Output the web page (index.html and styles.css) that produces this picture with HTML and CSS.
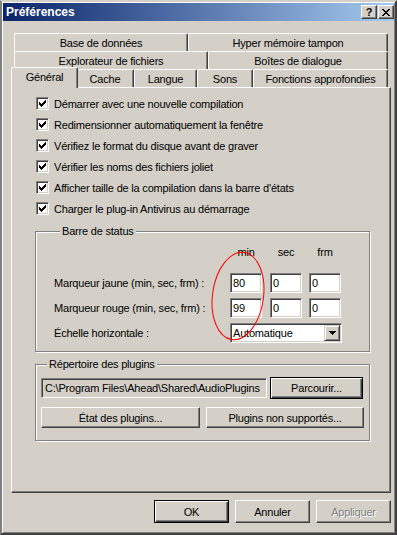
FILE: index.html
```html
<!DOCTYPE html>
<html>
<head>
    <title>Préférences</title>
    <link rel="stylesheet" href="styles.css">
</head>
<body>
<div class="window">
    <div class="titlebar">
        <span class="title">Préférences</span>
        <div class="caption-buttons">
            <span class="cap-btn">?</span>
            <span class="cap-btn">
                <svg width="8" height="7" viewBox="0 0 8 7"><path d="M0 0h2v1H0zM6 0h2v1H6zM1 1h2v1H1zM5 1h2v1H5zM2 2h4v1H2zM3 3h2v1H3zM2 4h4v1H2zM1 5h2v1H1zM5 5h2v1H5zM0 6h2v1H0zM6 6h2v1H6z" fill="#000"/></svg>
            </span>
        </div>
    </div>

    <div class="sheet">
        <!-- tab rows, back to front -->
        <div class="tab-row">
            <div class="tab tab-base">Base de données</div>
            <div class="tab tab-hyper">Hyper mémoire tampon</div>
        </div>
        <div class="tab-row">
            <div class="tab tab-explorer">Explorateur de fichiers</div>
            <div class="tab tab-dialogs">Boîtes de dialogue</div>
        </div>
        <div class="tab-row front">
            <div class="tab tab-general active">Général</div>
            <div class="tab tab-cache">Cache</div>
            <div class="tab tab-lang">Langue</div>
            <div class="tab tab-sounds">Sons</div>
            <div class="tab tab-advanced">Fonctions approfondies</div>
        </div>

        <div class="panel">
            <ul class="checks">
                <li><span class="checkbox"><svg width="7" height="7" viewBox="0 0 7 7"><path d="M6 0h1v1H6zM5 1h2v1H5zM0 2h1v1H0zM4 2h3v1H4zM0 3h2v1H0zM3 3h3v1H3zM0 4h5v1H0zM1 5h3v1H1zM2 6h1v1H2z"/></svg></span>Démarrer avec une nouvelle compilation</li>
                <li><span class="checkbox"><svg width="7" height="7" viewBox="0 0 7 7"><path d="M6 0h1v1H6zM5 1h2v1H5zM0 2h1v1H0zM4 2h3v1H4zM0 3h2v1H0zM3 3h3v1H3zM0 4h5v1H0zM1 5h3v1H1zM2 6h1v1H2z"/></svg></span>Redimensionner automatiquement la fenêtre</li>
                <li><span class="checkbox"><svg width="7" height="7" viewBox="0 0 7 7"><path d="M6 0h1v1H6zM5 1h2v1H5zM0 2h1v1H0zM4 2h3v1H4zM0 3h2v1H0zM3 3h3v1H3zM0 4h5v1H0zM1 5h3v1H1zM2 6h1v1H2z"/></svg></span>Vérifiez le format du disque avant de graver</li>
                <li><span class="checkbox"><svg width="7" height="7" viewBox="0 0 7 7"><path d="M6 0h1v1H6zM5 1h2v1H5zM0 2h1v1H0zM4 2h3v1H4zM0 3h2v1H0zM3 3h3v1H3zM0 4h5v1H0zM1 5h3v1H1zM2 6h1v1H2z"/></svg></span>Vérifier les noms des fichiers joliet</li>
                <li><span class="checkbox"><svg width="7" height="7" viewBox="0 0 7 7"><path d="M6 0h1v1H6zM5 1h2v1H5zM0 2h1v1H0zM4 2h3v1H4zM0 3h2v1H0zM3 3h3v1H3zM0 4h5v1H0zM1 5h3v1H1zM2 6h1v1H2z"/></svg></span>Afficher taille de la compilation dans la barre d'états</li>
                <li><span class="checkbox"><svg width="7" height="7" viewBox="0 0 7 7"><path d="M6 0h1v1H6zM5 1h2v1H5zM0 2h1v1H0zM4 2h3v1H4zM0 3h2v1H0zM3 3h3v1H3zM0 4h5v1H0zM1 5h3v1H1zM2 6h1v1H2z"/></svg></span>Charger le plug-in Antivirus au démarrage</li>
            </ul>

            <div class="group status-group">
                <span class="group-title">Barre de status</span>
                <div class="status-grid">
                    <span></span>
                    <span class="col-head">min</span>
                    <span class="col-head">sec</span>
                    <span class="col-head">frm</span>

                    <span>Marqueur jaune (min, sec, frm) :</span>
                    <span class="field">80</span>
                    <span class="field">0</span>
                    <span class="field">0</span>

                    <span>Marqueur rouge (min, sec, frm) :</span>
                    <span class="field">99</span>
                    <span class="field">0</span>
                    <span class="field">0</span>

                    <span>Échelle horizontale :</span>
                    <div class="combo">
                        <span class="combo-text">Automatique</span>
                        <span class="combo-btn"><svg width="7" height="4" viewBox="0 0 7 4"><path d="M0 0h7v1H0zM1 1h5v1H1zM2 2h3v1H2zM3 3h1v1H3z"/></svg></span>
                    </div>
                </div>
            </div>

            <div class="group plugins-group">
                <span class="group-title">Répertoire des plugins</span>
                <div class="plugin-row">
                    <span class="field path">C:\Program Files\Ahead\Shared\AudioPlugins</span>
                    <span class="btn default browse">Parcourir...</span>
                </div>
                <div class="plugin-row second">
                    <span class="btn state">État des plugins...</span>
                    <span class="btn unsupported">Plugins non supportés...</span>
                </div>
            </div>
        </div>

        <div class="dialog-buttons">
            <span class="btn default">OK</span>
            <span class="btn">Annuler</span>
            <span class="btn disabled">Appliquer</span>
        </div>
    </div>

    <!-- red hand-drawn circle over the min column -->
    <svg class="annotation" width="397" height="535" viewBox="0 0 397 535">
        <ellipse cx="238" cy="296" rx="25.5" ry="44" transform="rotate(8 238 296)" fill="none" stroke="#f00" stroke-width="1"/>
    </svg>
</div>
</body>
</html>
```

FILE: styles.css
```css
/* classic windows dialog */

body {
    margin: 0;
    background: #d4d0c8;
    font-family: "Liberation Sans", Arial, sans-serif;
    font-size: 11px;
    letter-spacing: -0.2px;
    color: #000;
}

.window {
    position: relative;
    width: 397px;
    height: 535px;
    box-sizing: border-box;
    padding: 1px;
    background: #d4d0c8;
    border-style: solid;
    border-width: 2px;
    border-color: #d4d0c8 #404040 #404040 #808080;
    box-shadow: inset 1px 1px #fff, inset -1px -1px #808080;
}

.titlebar {
    height: 18px;
    display: flex;
    align-items: center;
    justify-content: space-between;
    padding-left: 3px;
    background: linear-gradient(to right, #0a246a, #a6caf0);
    color: #fff;
}

.title {
    font-weight: bold;
    font-size: 12px;
    letter-spacing: 0;
}

.caption-buttons {
    display: flex;
    gap: 1px;
}

.cap-btn {
    box-sizing: border-box;
    width: 16px;
    height: 14px;
    display: flex;
    align-items: center;
    justify-content: center;
    background: #d4d0c8;
    color: #000;
    font-weight: bold;
    font-size: 11px;
    border: 1px solid;
    border-color: #fff #404040 #404040 #fff;
    box-shadow: inset -1px -1px #808080;
}

.sheet {
    margin: 12px 0 0 8px;
    width: 380px;
}

/* tabs */
.tab-row {
    display: flex;
    align-items: flex-start;
    height: 18px;
    margin: 0 3px;
}

.tab-row.front {
    position: relative;
    z-index: 1;
    margin: 0 3px 0 2px;
}

.tab {
    box-sizing: border-box;
    height: 18px;
    display: flex;
    align-items: center;
    justify-content: center;
    background: #d4d0c8;
    border-top: 1px solid #fff;
    border-left: 1px solid #fff;
    border-right: 1px solid #404040;
    border-radius: 2px 2px 0 0;
    box-shadow: inset -1px 0 #808080;
    white-space: nowrap;
}

.tab.active {
    position: relative;
    z-index: 2;
    height: 21px;
    margin: -2px -2px 0;
    padding-bottom: 2px;
}

.tab-base { width: 174px; }
.tab-hyper { width: 200px; }
.tab-explorer { width: 194px; }
.tab-dialogs { width: 180px; }
.tab-general { width: 67px; }
.tab-cache { width: 58px; }
.tab-lang { width: 63px; }
.tab-sounds { width: 56px; }
.tab-advanced { width: 135px; }

.panel {
    box-sizing: border-box;
    height: 406px;
    padding: 5px 20px 0 23px;
    border: 1px solid;
    border-color: #fff #404040 #404040 #fff;
    box-shadow: inset -1px -1px #808080;
}

.checks {
    list-style: none;
    margin: 0 0 0 1px;
    padding: 0;
}

.checks li {
    display: flex;
    align-items: center;
    gap: 5px;
    height: 21px;
}

.checkbox {
    box-sizing: border-box;
    width: 13px;
    height: 13px;
    display: flex;
    align-items: center;
    justify-content: center;
    background: #fff;
    border: 1px solid;
    border-color: #808080 #fff #fff #808080;
    box-shadow: inset 1px 1px #404040, inset -1px -1px #d4d0c8;
}

/* group boxes */
.group {
    border: 1px solid #808080;
    box-shadow: inset 1px 1px #fff, 1px 1px #fff;
}

.group-title {
    display: table;
    margin: -7px 0 0 6px;
    padding: 0 2px;
    line-height: 13px;
    background: #d4d0c8;
}

.status-group {
    margin-top: 12px;
    padding: 0 0 8px 18px;
}

.status-grid {
    display: grid;
    grid-template-columns: 176px 40px 39px 32px;
    grid-template-rows: 23px 20px 20px 20px;
    row-gap: 5px;
    align-items: center;
    margin-top: 7px;
}

.col-head {
    align-self: start;
    width: 32px;
    line-height: 14px;
    text-align: center;
}

.field {
    box-sizing: border-box;
    width: 32px;
    height: 20px;
    padding-left: 2px;
    line-height: 18px;
    background: #fff;
    border: 1px solid;
    border-color: #808080 #fff #fff #808080;
    box-shadow: inset 1px 1px #404040, inset -1px -1px #d4d0c8;
    white-space: nowrap;
    overflow: hidden;
}

.combo {
    grid-column: 2 / span 3;
    box-sizing: border-box;
    width: 112px;
    height: 20px;
    display: flex;
    align-items: center;
    justify-content: space-between;
    padding: 1px;
    background: #fff;
    border: 1px solid;
    border-color: #808080 #fff #fff #808080;
    box-shadow: inset 1px 1px #404040, inset -1px -1px #d4d0c8;
}

.combo-text {
    padding-left: 1px;
}

.combo-btn {
    box-sizing: border-box;
    width: 16px;
    height: 16px;
    display: flex;
    align-items: center;
    justify-content: center;
    background: #d4d0c8;
    border: 1px solid;
    border-color: #d4d0c8 #404040 #404040 #d4d0c8;
    box-shadow: inset 1px 1px #fff, inset -1px -1px #808080;
}

.plugins-group {
    margin-top: 12px;
    padding: 0 4px 12px 5px;
}

.plugin-row {
    display: flex;
    align-items: center;
    gap: 3px;
    margin-top: 6px;
}

.plugin-row.second {
    gap: 6px;
    margin-top: 8px;
}

.field.path {
    width: 226px;
    background: #d4d0c8;
    padding-left: 3px;
}

/* buttons */
.btn {
    box-sizing: border-box;
    height: 23px;
    display: flex;
    align-items: center;
    justify-content: center;
    background: #d4d0c8;
    border: 1px solid;
    border-color: #fff #404040 #404040 #fff;
    box-shadow: inset -1px -1px #808080;
    white-space: nowrap;
}

.btn.default {
    border-color: #000;
    box-shadow: inset 1px 1px #fff, inset -1px -1px #404040, inset -2px -2px #808080;
}

.btn.disabled {
    color: #808080;
    text-shadow: 1px 1px #fff;
}

.browse { width: 93px; height: 22px; }
.state { width: 159px; height: 21px; }
.unsupported { width: 158px; height: 21px; }

.dialog-buttons {
    display: flex;
    justify-content: flex-end;
    gap: 6px;
    margin-top: 7px;
}

.dialog-buttons .btn {
    width: 75px;
}

.annotation {
    position: absolute;
    left: -2px;
    top: -2px;
    pointer-events: none;
}
```
